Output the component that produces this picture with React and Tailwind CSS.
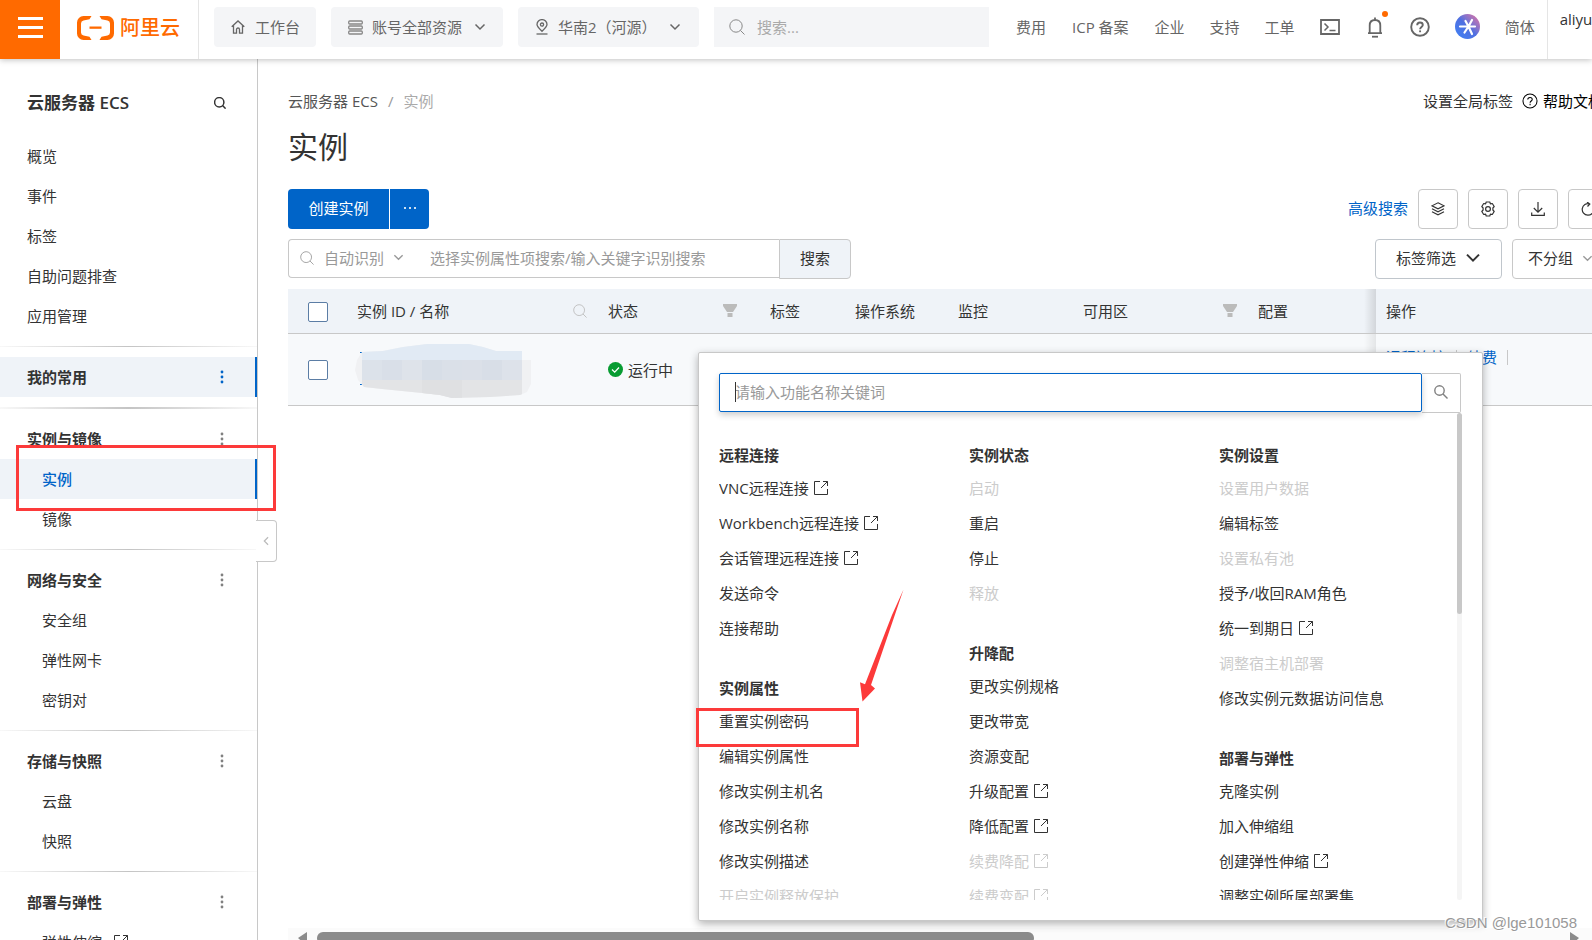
import { useState } from 'react';

const menuTop = ['概览', '事件', '标签', '自助问题排查', '应用管理'];

const menuGroups = [
  { title: '实例与镜像', items: [{ name: '实例', active: true }, { name: '镜像' }] },
  { title: '网络与安全', items: [{ name: '安全组' }, { name: '弹性网卡' }, { name: '密钥对' }] },
  { title: '存储与快照', items: [{ name: '云盘' }, { name: '快照' }] },
  { title: '部署与弹性', items: [{ name: '弹性伸缩', external: true }] },
];

const actionColumns = [
  [
    {
      title: '远程连接',
      items: [
        { name: 'VNC远程连接', external: true },
        { name: 'Workbench远程连接', external: true },
        { name: '会话管理远程连接', external: true },
        { name: '发送命令' },
        { name: '连接帮助' },
      ],
    },
    {
      title: '实例属性',
      items: [
        { name: '重置实例密码' },
        { name: '编辑实例属性' },
        { name: '修改实例主机名' },
        { name: '修改实例名称' },
        { name: '修改实例描述' },
        { name: '开启实例释放保护', disabled: true },
      ],
    },
  ],
  [
    {
      title: '实例状态',
      items: [
        { name: '启动', disabled: true },
        { name: '重启' },
        { name: '停止' },
        { name: '释放', disabled: true },
      ],
    },
    {
      title: '升降配',
      items: [
        { name: '更改实例规格' },
        { name: '更改带宽' },
        { name: '资源变配' },
        { name: '升级配置', external: true },
        { name: '降低配置', external: true },
        { name: '续费降配', external: true, disabled: true },
        { name: '续费变配', external: true, disabled: true },
      ],
    },
  ],
  [
    {
      title: '实例设置',
      items: [
        { name: '设置用户数据', disabled: true },
        { name: '编辑标签' },
        { name: '设置私有池', disabled: true },
        { name: '授予/收回RAM角色' },
        { name: '统一到期日', external: true },
        { name: '调整宿主机部署', disabled: true },
        { name: '修改实例元数据访问信息' },
      ],
    },
    {
      title: '部署与弹性',
      items: [
        { name: '克隆实例' },
        { name: '加入伸缩组' },
        { name: '创建弹性伸缩', external: true },
        { name: '调整实例所属部署集' },
      ],
    },
  ],
];

/* ---------- icons ---------- */

function SearchIcon({ className }) {
  return (
    <svg className={className} viewBox="0 0 16 16" fill="none" stroke="currentColor">
      <circle cx="7" cy="7" r="6.200" />
      <path d="M11.400 11.400L15.500 15.500" />
    </svg>
  );
}

function ChevronDown({ className, strokeWidth = 1.5 }) {
  return (
    <svg className={className} viewBox="0 0 12 12" fill="none" stroke="currentColor" strokeWidth={strokeWidth}>
      <path d="M1.500 3.500L6 8l4.500-4.500" />
    </svg>
  );
}

function ExternalIcon() {
  return (
    <svg className="h-[14px] w-[14px]" viewBox="0 0 14 14" fill="none" stroke="currentColor">
      <path d="M6 .5H.5v13h13V8" />
      <path d="M9 .5h4.500V5M13.500.5L7 7" />
    </svg>
  );
}

function FilterIcon() {
  return (
    <svg className="h-[14px] w-[14px] text-[#bbb]" viewBox="0 0 14 14" fill="currentColor">
      <path d="M0 0h14v2L10 8H4L0 2z" />
      <path d="M4.500 9h5v4h-5z" />
    </svg>
  );
}

function Kebab({ className }) {
  return (
    <svg className={className} viewBox="0 0 4 14" fill="currentColor">
      <circle cx="2" cy="2" r="1.400" />
      <circle cx="2" cy="7" r="1.400" />
      <circle cx="2" cy="12" r="1.400" />
    </svg>
  );
}

function HelpIcon({ className, strokeWidth }) {
  return (
    <svg className={className} viewBox="0 0 20 20" fill="none" stroke="currentColor" strokeWidth={strokeWidth}>
      <circle cx="10" cy="10" r="8.800" />
      <path d="M7.200 8.200C7.200 6.500 8.400 5.500 10 5.500s2.800 1 2.800 2.500c0 1.900-2.700 2.100-2.700 4.200" />
      <path d="M10.100 13.400v1.800" />
    </svg>
  );
}

function AliyunMark() {
  return (
    <svg className="h-[24px] w-[37px]" viewBox="0 0 37 24" fill="#ff6a00">
      <path d="M14.500 0H6.500A6.500 6.500 0 0 0 0 6.500v11A6.500 6.500 0 0 0 6.500 24h8l-2-3.200-6-1.300A3 3 0 0 1 4 16.600V7.400a3 3 0 0 1 2.500-2.900l6-1.300z" />
      <path d="M22.500 0h8A6.500 6.500 0 0 1 37 6.500v11a6.500 6.500 0 0 1-6.500 6.500h-8l2-3.200 6-1.300a3 3 0 0 0 2.500-2.900V7.400a3 3 0 0 0-2.500-2.900l-6-1.300z" />
      <path d="M12.500 10.500h12v2.300h-12z" />
    </svg>
  );
}

function MaskedId() {
  const shades = ['#dce2ea', '#d9dfe8', '#dee3ea', '#d7dee7', '#dae0e8', '#dbe0e8', '#d8dee7', '#dde2ea'];
  return (
    <svg className="mt-[3px] block h-[54px] w-[178px]" viewBox="0 0 178 54">
      <defs>
        <clipPath id="blob">
          <path d="M7 8L28 7 48 3 72 0h42l14 3 13 4h26v9h9v24l-4 8-7 3-30 2-38 1-12-3-18-2-40-4-18-2-6-7-3-10 2-10z" />
        </clipPath>
      </defs>
      <path d="M5 8h2v1H5zM5 40h2v1H5z" fill="#0064c8" />
      <g clipPath="url(#blob)">
        <rect width="178" height="54" fill="#f0f1f3" />
        <rect x="7" width="160" height="16" fill="#e1eaf4" />
        <rect x="7" y="36" width="160" height="18" fill="#e3e4e6" />
        {shades.map((c, i) => (
          <rect key={i} x={7 + i * 20} y="16" width="20" height="20" fill={c} />
        ))}
        <rect x="67" y="36" width="40" height="18" fill="#dfe0e2" />
      </g>
    </svg>
  );
}

/* ---------- header ---------- */

function HeaderSelect({ icon, value, label, className }) {
  return (
    <label className={`flex h-10 shrink-0 items-center rounded-sm bg-[#f4f5f7] pl-[17px] ${className}`}>
      {icon}
      <select aria-label={label} className="ml-[9px] flex-1 appearance-none outline-none">
        <option>{value}</option>
      </select>
      <ChevronDown className="h-3 w-3" />
    </label>
  );
}

function Header() {
  return (
    <header className="relative z-20 flex h-[59px] shrink-0 overflow-x-clip bg-white text-[#666] shadow-[0_1px_6px_rgba(0,0,0,0.25)]">
      <button aria-label="菜单" className="flex w-[60px] shrink-0 flex-col items-center justify-center gap-[6px] bg-[#ff6a00] pb-1">
        <span className="h-[3px] w-[25px] bg-white"></span>
        <span className="h-[3px] w-[25px] bg-white"></span>
        <span className="h-[3px] w-[25px] bg-white"></span>
      </button>
      <a href="#" className="flex w-[139px] shrink-0 items-center gap-[6px] border-r border-[#e5e5e5] pb-1 pl-[17px]">
        <AliyunMark />
        <span className="text-[20px] leading-6 font-medium text-[#ff6a00]">阿里云</span>
      </a>

      <div className="flex shrink-0 items-center gap-[15px] pb-[5px] pl-[15px]">
        <button className="flex h-10 w-[102px] items-center gap-[10px] rounded-sm bg-[#f4f5f7] pl-[17px]">
          <svg className="h-[14px] w-[14px]" viewBox="0 0 14 14" fill="none" stroke="currentColor" strokeWidth="1.300">
            <path d="M.7 6.800L7 1l6.300 5.800M2.500 5.500v7.700h3V9.500a1.500 1.500 0 0 1 3 0v3.700h3V5.500" />
          </svg>
          工作台
        </button>
        <HeaderSelect
          label="资源组"
          value="账号全部资源"
          className="w-[172px] pr-[17px]"
          icon={
            <svg className="h-[15px] w-[15px]" viewBox="0 0 15 15" fill="none" stroke="#888" strokeWidth="1.300">
              <rect x=".7" y="1" width="13.600" height="3" rx="1" />
              <rect x=".7" y="6" width="13.600" height="3" rx="1" />
              <rect x=".7" y="11" width="13.600" height="3" rx="1" />
            </svg>
          }
        />
        <HeaderSelect
          label="地域"
          value="华南2（河源）"
          className="w-[181px] pr-[18px]"
          icon={
            <svg className="h-[16px] w-[14px]" viewBox="0 0 14 16" fill="none" stroke="currentColor" strokeWidth="1.300">
              <path d="M7 12.300C4 9.500 2 7.700 2 5.600a5 5 0 0 1 10 0c0 2.100-2 3.900-5 6.700z" />
              <circle cx="7" cy="5.600" r="1.600" />
              <path d="M1.500 15h11" />
            </svg>
          }
        />
        <label className="flex h-10 w-[275px] items-center gap-3 bg-[#f4f5f7] pl-[15px]">
          <SearchIcon className="h-4 w-4 text-[#888]" />
          <input type="search" aria-label="搜索" placeholder="搜索..." className="min-w-0 flex-1 outline-none placeholder:text-[#aaa]" />
        </label>
      </div>

      <nav className="flex shrink-0 items-center gap-[25px] pb-[6px] pl-[27px] whitespace-nowrap">
        <a href="#">费用</a>
        <a href="#" className="px-px">ICP 备案</a>
        <a href="#">企业</a>
        <a href="#">支持</a>
        <a href="#">工单</a>
        <button aria-label="Cloud Shell">
          <svg className="h-[16px] w-[20px]" viewBox="0 0 20 16" fill="none" stroke="currentColor" strokeWidth="1.800">
            <path d="M1 1h18v14H1z" />
            <path d="M4.500 4.500L8 8l-3.500 3.500M9.500 11.500h6" strokeWidth="1.500" />
          </svg>
        </button>
        <button aria-label="消息" className="relative">
          <svg className="h-[22px] w-[20px]" viewBox="0 0 20 22" fill="none" stroke="currentColor" strokeWidth="1.800">
            <path d="M3 17.200h14M4.700 17V9.500C4.700 6 6.800 4 10 4s5.300 2 5.300 5.500V17M10 4V1.500" />
            <path d="M7 20.700h6" />
          </svg>
          <span className="absolute -top-[5px] -right-[3px] h-[6px] w-[6px] rounded-full bg-[#ff6a00]"></span>
        </button>
        <button aria-label="帮助">
          <HelpIcon className="h-[20px] w-[20px]" strokeWidth="1.900" />
        </button>
        <button aria-label="AI 助理" className="flex h-[25px] w-[25px] items-center justify-center rounded-full bg-linear-to-bl from-[#e8689a] via-[#4f6fe0] via-50% to-[#3b82f6]">
          <svg className="h-[19px] w-[19px]" viewBox="0 0 19 19" fill="none" stroke="white" strokeWidth="2.200" strokeLinecap="round">
            <path d="M2 9.500h15M10.500 9.500L7.500 4M10.500 9.500L14 3M10.500 9.500L6.500 15.500M10.500 9.500l3.500 7.500" />
          </svg>
        </button>
        <a href="#">简体</a>
      </nav>
      <div className="ml-3 shrink-0 border-l border-[#e5e5e5] pt-2 pl-3">
        <a href="#" className="leading-5 text-[#333]">aliyu</a>
      </div>
    </header>
  );
}

/* ---------- sidebar ---------- */

function Divider({ thick }) {
  return (
    <div className={`${thick ? 'h-[2px]' : 'h-px'} bg-linear-to-r from-[#f8f8f8] via-[#c4c4c4] to-[#f8f8f8]`}></div>
  );
}

function Sidebar() {
  return (
    <aside className="relative w-[258px] shrink-0 border-r border-[#c8c8c8]">
      <div className="h-full overflow-hidden">
        <div className="flex items-center justify-between pt-8 pr-[31px] pb-[21px] pl-[27px]">
          <h2 className="text-[17px] leading-6 font-bold">
            云服务器 <span className="font-semibold">ECS</span>
          </h2>
          <button aria-label="搜索菜单">
            <SearchIcon className="h-3 w-3 stroke-2" />
          </button>
        </div>

        <ul className="pb-[10px]">
          {menuTop.map((name) => (
            <li key={name}>
              <a href="#" className="block pl-[27px] leading-10">{name}</a>
            </li>
          ))}
        </ul>
        <Divider />
        <div className="py-[10px]">
          <div className="flex h-10 items-center justify-between border-r-2 border-[#0064c8] bg-[#eff3f8] pr-[31px] pl-[27px]">
            <span className="font-bold">我的常用</span>
            <button aria-label="我的常用 更多">
              <Kebab className="h-[14px] w-1 text-[#0064c8]" />
            </button>
          </div>
        </div>
        <Divider thick />

        {menuGroups.map((group, i) => (
          <div key={group.title}>
            {i > 0 && <Divider />}
            <div className="py-[10px]">
              <div className="flex h-10 items-center justify-between pr-[33px] pl-[27px]">
                <span className="font-bold">{group.title}</span>
                <button aria-label={`${group.title} 更多`}>
                  <Kebab className="h-[14px] w-1 text-[#808080]" />
                </button>
              </div>
              <ul>
                {group.items.map((item) => (
                  <li key={item.name}>
                    <a
                      href="#"
                      className={`flex h-10 items-center gap-3 pl-[42px] ${item.active ? 'border-r-2 border-[#0064c8] bg-[#eff3f8] font-medium text-[#0064c8]' : ''}`}
                    >
                      {item.name}
                      {item.external && <ExternalIcon />}
                    </a>
                  </li>
                ))}
              </ul>
            </div>
          </div>
        ))}
      </div>

      <button
        aria-label="收起菜单"
        className="absolute top-[461px] -right-[20px] flex h-[42px] w-[21px] items-center justify-center rounded-r-sm border border-l-0 border-[#c8c8c8] bg-white"
      >
        <ChevronDown className="h-[10px] w-[10px] rotate-90 text-[#bbb]" />
      </button>
    </aside>
  );
}

/* ---------- instance list ---------- */

function Toolbar() {
  const square = 'flex h-10 w-10 items-center justify-center rounded-sm border border-[#c8c8c8] bg-white';
  return (
    <div className="flex items-center justify-between">
      <div className="flex gap-px text-white">
        <button className="h-10 w-[101px] rounded-l-sm bg-[#0064c8] pb-[2px]">创建实例</button>
        <button aria-label="更多" className="flex h-10 w-[39px] items-center justify-center gap-[3px] rounded-r-sm bg-[#0064c8] pb-[2px]">
          <span className="h-[2px] w-[2px] bg-white/80"></span>
          <span className="h-[2px] w-[2px] bg-white/80"></span>
          <span className="h-[2px] w-[2px] bg-white/80"></span>
        </button>
      </div>
      <div className="flex items-center gap-[10px]">
        <a href="#" className="pb-[2px] text-[#0064c8]">高级搜索</a>
        <button aria-label="资源组" className={square}>
          <svg className="h-[14px] w-[14px]" viewBox="0 0 14 14" fill="none" stroke="currentColor" strokeWidth="1.100">
            <path d="M7 .8l6 3-6 3-6-3zM1 6.800l6 3 6-3M1 9.800l6 3 6-3" />
          </svg>
        </button>
        <button aria-label="设置" className={square}>
          <svg className="h-4 w-4" viewBox="0 0 16 16" fill="none" stroke="currentColor" strokeWidth="1.200" strokeLinejoin="round">
            <path d="M6.200 1h3.600l.6 1.900 1.900-.4 1.900 3-1.300 1.500v2l1.300 1.500-1.900 3-1.900-.4-.6 1.900H6.200l-.6-1.900-1.900.4-1.900-3L3.100 9V7L1.800 5.500l1.900-3 1.900.4z" />
            <circle cx="8" cy="8" r="2.400" />
          </svg>
        </button>
        <button aria-label="导出" className={square}>
          <svg className="h-[14px] w-[14px]" viewBox="0 0 14 14" fill="none" stroke="currentColor" strokeWidth="1.200">
            <path d="M7 0v10M2.800 6L7 10.200 11.200 6M.7 10.500v2.800h12.600v-2.800" />
          </svg>
        </button>
        <button aria-label="刷新" className={square}>
          <svg className="h-[14px] w-[14px]" viewBox="0 0 14 14" fill="none" stroke="currentColor" strokeWidth="1.200">
            <path d="M8.500 1.800A5.800 5.800 0 1 0 12.800 7M6 0l2.800 2L6.500 4.500" />
          </svg>
        </button>
      </div>
    </div>
  );
}

function SearchRow() {
  return (
    <div className="mt-[10px] flex justify-between">
      <div className="flex">
        <div className="flex h-[39px] w-[491px] items-center rounded-l-sm border border-r-0 border-[#c8c8c8] pb-[2px] pl-[11px] text-[#999]">
          <SearchIcon className="h-[14px] w-[14px]" />
          <label className="ml-[10px] flex items-center gap-2">
            <select aria-label="搜索类型" className="appearance-none outline-none">
              <option>自动识别</option>
            </select>
            <ChevronDown className="h-[11px] w-[11px]" />
          </label>
          <input
            type="text"
            aria-label="实例搜索"
            placeholder="选择实例属性项搜索/输入关键字识别搜索"
            className="ml-[26px] min-w-0 flex-1 outline-none placeholder:text-[#999]"
          />
        </div>
        <button className="h-10 w-[72px] rounded-r-sm border border-[#c8c8c8] bg-[#eff3f8] pb-[2px]">搜索</button>
      </div>
      <div className="flex gap-[10px]">
        <button className="flex h-10 w-[127px] items-center justify-center gap-[9px] rounded-sm border border-[#c0c6cc] pb-[2px]">
          标签筛选
          <ChevronDown className="h-4 w-4" />
        </button>
        <label className="flex h-10 w-[96px] items-center gap-2 rounded-sm border border-[#c8c8c8] pb-[2px] pl-[15px]">
          <select aria-label="分组" className="appearance-none outline-none">
            <option>不分组</option>
          </select>
          <ChevronDown className="h-[11px] w-[11px] shrink-0 text-[#999]" />
        </label>
      </div>
    </div>
  );
}

function Checkbox({ label }) {
  return (
    <input
      type="checkbox"
      aria-label={label}
      className="block h-5 w-5 appearance-none rounded-xs border border-[#5b7da5] bg-white checked:bg-[#0064c8]"
    />
  );
}

function InstanceTable() {
  const th = 'h-[45px] border-b border-[#c8c8c8] bg-[#eff3f8] pl-[10px] text-left font-normal';
  const td = 'h-[72px] border-b border-[#c8c8c8] bg-[#f7f9fb]';
  return (
    <table className="mt-[10px] w-full table-fixed border-separate border-spacing-0">
      <colgroup>
        <col className="w-[59px]" />
        <col className="w-[251px]" />
        <col className="w-[162px]" />
        <col className="w-[85px]" />
        <col className="w-[103px]" />
        <col className="w-[125px]" />
        <col className="w-[175px]" />
        <col className="w-[128px]" />
        <col />
      </colgroup>
      <thead>
        <tr>
          <th className="h-[45px] border-b border-[#c8c8c8] bg-[#eff3f8] pt-px pl-5">
            <Checkbox label="全选" />
          </th>
          <th className={th}>
            <div className="flex items-center justify-between pr-[11px]">
              实例 ID / 名称
              <SearchIcon className="h-[14px] w-[14px] text-[#bbb]" />
            </div>
          </th>
          <th className={th}>
            <div className="flex items-center justify-between pr-[23px]">
              状态
              <FilterIcon />
            </div>
          </th>
          <th className={th}>标签</th>
          <th className={th}>操作系统</th>
          <th className={th}>监控</th>
          <th className={th}>
            <div className="flex items-center justify-between pr-[11px]">
              可用区
              <FilterIcon />
            </div>
          </th>
          <th className={th}>配置</th>
          <th className={`relative ${th}`}>
            <span className="absolute inset-y-0 right-full w-3 bg-linear-to-l from-black/12 to-transparent"></span>
            操作
          </th>
        </tr>
      </thead>
      <tbody>
        <tr>
          <td className={`${td} pl-5`}>
            <Checkbox label="选择实例" />
          </td>
          <td className={`${td} pl-2`}>
            <MaskedId />
          </td>
          <td className={`${td} pl-[10px]`}>
            <div className="flex items-center gap-[5px]">
              <svg className="h-[15px] w-[15px]" viewBox="0 0 15 15" fill="none">
                <circle cx="7.500" cy="7.500" r="7.500" fill="#089c32" />
                <path d="M4 7.500l2.700 2.600L11 5.500" stroke="white" strokeWidth="1.300" />
              </svg>
              运行中
            </div>
          </td>
          <td className={td}></td>
          <td className={td}></td>
          <td className={td}></td>
          <td className={td}></td>
          <td className={td}></td>
          <td className={`relative ${td} pt-3 pl-[10px] align-top`}>
            <span className="absolute inset-y-0 right-full w-3 bg-linear-to-l from-black/8 to-transparent"></span>
            <div className="flex items-center gap-[10px] text-[#0064c8]">
              <a href="#">远程连接</a>
              <span className="h-[15px] w-px bg-[#c8c8c8]"></span>
              <a href="#">续费</a>
              <span className="h-[15px] w-px bg-[#c8c8c8]"></span>
            </div>
          </td>
        </tr>
      </tbody>
    </table>
  );
}

function ActionMenu() {
  const [keyword, setKeyword] = useState('');

  return (
    <div className="absolute top-[293px] bottom-[19px] left-[440px] z-10 flex w-[785px] flex-col rounded-xs border border-[#c8c8c8] bg-white px-5 pt-5 pb-5 shadow-[0_3px_8px_rgba(0,0,0,0.3)]">
      <div className="flex shrink-0 pr-px">
        <label className="relative flex h-[39px] flex-1 items-center rounded-xs border border-[#0064c8] px-[15px] pb-[2px] shadow-[0_3px_6px_rgba(0,0,0,0.2)]">
          <span className="absolute left-[15px] h-5 w-px bg-[#333]"></span>
          <input
            type="text"
            aria-label="功能搜索"
            value={keyword}
            onChange={(e) => setKeyword(e.target.value)}
            placeholder="请输入功能名称关键词"
            className="w-full outline-none placeholder:text-[#999]"
          />
        </label>
        <button aria-label="搜索功能" className="flex h-10 w-[39px] items-center justify-center rounded-r-xs border border-l-0 border-[#c8c8c8] pb-[2px] text-[#808080]">
          <svg className="h-[14px] w-[14px]" viewBox="0 0 14 14" fill="none" stroke="currentColor" strokeWidth="1.400">
            <circle cx="5.500" cy="5.500" r="4.700" />
            <path d="M9 9l4.500 4.500" />
          </svg>
        </button>
      </div>

      <div className="flex min-h-0 flex-1">
        <div className="grid flex-1 grid-cols-[250px_250px_1fr] overflow-hidden">
          {actionColumns.map((column, i) => (
            <div key={i}>
              {column.map((group) => (
                <div key={group.title} className="pt-[30px]">
                  <h3 className="mb-1 leading-6 font-bold">{group.title}</h3>
                  <ul>
                    {group.items.map((item) => (
                      <li key={item.name}>
                        <button
                          disabled={item.disabled}
                          className={`flex h-[35px] items-center gap-[5px] pb-px ${item.disabled ? 'text-[#ccc]' : ''}`}
                        >
                          {item.name}
                          {item.external && <ExternalIcon />}
                        </button>
                      </li>
                    ))}
                  </ul>
                </div>
              ))}
            </div>
          ))}
        </div>
        <div className="w-[5px] rounded-full bg-[#f5f5f5]">
          <div className="h-[201px] rounded-full bg-[#c8c8c8]"></div>
        </div>
      </div>
    </div>
  );
}

function Annotations() {
  return (
    <div className="pointer-events-none absolute inset-0 z-30 overflow-hidden">
      <div className="absolute top-[445px] left-4 h-[66px] w-[260px] border-[3px] border-[#fc3a3a]"></div>
      <div className="absolute top-[708px] left-[696px] h-[39px] w-[163px] border-[3px] border-[#fc3a3a]"></div>
      <svg className="absolute top-[588px] left-[858px] h-[115px] w-[48px]" viewBox="0 0 48 115" fill="#fc3a3a">
        <path d="M45.500 1.500L13 97l4 3.500L4.500 113.500 2 94.300l5 2L34 27z" />
      </svg>
      <div className="absolute right-[15px] bottom-[7px] font-['Liberation_Sans',sans-serif] text-[15px] leading-5 text-[#999] [text-shadow:1px_1px_0_#fff,-1px_-1px_0_#fff]">
        CSDN @lge101058
      </div>
    </div>
  );
}

export default function App() {
  return (
    <div className="relative flex h-screen flex-col overflow-hidden bg-white font-['Open_Sans','Noto_Sans_CJK_SC',sans-serif] text-[15px] leading-[22px] text-[#333]">
      <Header />
      <div className="flex min-h-0 flex-1">
        <Sidebar />
        <main className="relative flex min-w-0 flex-1 flex-col overflow-x-clip pl-[30px]">
          <div className="-mr-4 flex-1">
            <div className="flex justify-between pt-[31px] whitespace-nowrap">
              <nav className="flex gap-[10px]">
                <a href="#" className="text-[#555]">云服务器 ECS</a>
                <span className="text-[#999]">/</span>
                <span className="text-[#aaa]">实例</span>
              </nav>
              <div className="mr-[5px] flex items-center gap-[9px]">
                <a href="#">设置全局标签</a>
                <a href="#" className="flex items-center gap-[5px] text-black">
                  <HelpIcon className="h-4 w-4" strokeWidth="1.300" />
                  帮助文档
                </a>
              </div>
            </div>
            <h1 className="mt-[15px] mb-[22px] text-[30px] leading-10">实例</h1>
            <Toolbar />
            <SearchRow />
            <InstanceTable />
          </div>
          <div className="flex h-3 items-start gap-[10px] overflow-hidden bg-[#fbfbfb] pt-1 pr-[13px] pl-[10px]">
            <svg className="h-[14px] w-[9px] shrink-0 text-[#8b8b8b]" viewBox="0 0 9 14" fill="currentColor">
              <path d="M9 0v14L0 6z" />
            </svg>
            <div className="h-3 w-[56%] rounded-md bg-[#8b8b8b]"></div>
            <svg className="ml-auto h-[14px] w-[9px] shrink-0 text-[#8b8b8b]" viewBox="0 0 9 14" fill="currentColor">
              <path d="M0 0v14l9-8z" />
            </svg>
          </div>
          <ActionMenu />
        </main>
      </div>
      <Annotations />
    </div>
  );
}
